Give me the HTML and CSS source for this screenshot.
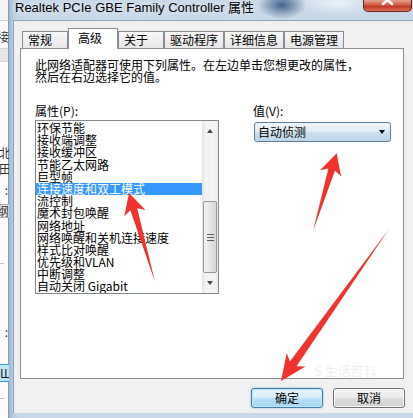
FILE: index.html
```html
<!DOCTYPE html>
<html>
<head>
<meta charset="utf-8">
<title>Realtek PCIe GBE Family Controller 属性</title>
<link rel="stylesheet" href="styles.css">
</head>
<body>
<div class="screen">
  <div class="behind">
    <div class="b-head"></div>
    <div class="frag f-jie">接</div>
    <div class="b-band"></div>
    <div class="frag f-bei">北</div>
    <div class="frag f-tian">田</div>
    <div class="frag f-colon">:</div>
    <div class="frag f-box">纲</div>
    <div class="b-line l1"></div>
    <div class="frag f-colon2">:</div>
    <div class="frag f-blue">Ш</div>
    <div class="b-line l2"></div>
  </div>
  <div class="window">
    <div class="titlebar">
      <span class="title">Realtek PCIe GBE Family Controller 属性</span>
      <span class="close"><svg width="47" height="11" viewBox="0 0 47 11"><path d="M19 -4 L28 4 M28 -4 L19 4" stroke="#fff" stroke-width="2.6" stroke-linecap="round"/></svg></span>
    </div>
    <div class="client">
      <div class="tabs">
        <div class="tab">常规</div>
        <div class="tab active">高级</div>
        <div class="tab">关于</div>
        <div class="tab">驱动程序</div>
        <div class="tab">详细信息</div>
        <div class="tab">电源管理</div>
      </div>
      <div class="panel">
        <p class="desc">此网络适配器可使用下列属性。在左边单击您想更改的属性，<br>然后在右边选择它的值。</p>
        <div class="cols">
          <div class="col-left">
            <div class="label">属性(P):</div>
            <div class="listbox">
              <ul class="items">
                <li>环保节能</li>
                <li>接收端调整</li>
                <li>接收缓冲区</li>
                <li>节能乙太网路</li>
                <li>巨型帧</li>
                <li class="sel">连接速度和双工模式</li>
                <li>流控制</li>
                <li>魔术封包唤醒</li>
                <li>网络地址</li>
                <li>网络唤醒和关机连接速度</li>
                <li>样式比对唤醒</li>
                <li>优先级和VLAN</li>
                <li>中断调整</li>
                <li>自动关闭 Gigabit</li>
              </ul>
              <div class="vscroll">
                <div class="sb-btn"><span class="tri up"></span></div>
                <div class="track">
                  <div class="thumb"><span class="grip"></span></div>
                </div>
                <div class="sb-btn"><span class="tri down"></span></div>
              </div>
            </div>
          </div>
          <div class="col-right">
            <div class="label">值(V):</div>
            <div class="select"><span>自动侦测</span><span class="caret"></span></div>
          </div>
        </div>
      </div>
      <div class="buttons">
        <button class="btn default">确定</button>
        <button class="btn">取消</button>
      </div>
    </div>
  </div>
  <div class="watermark">S 生活百科</div>
  <svg class="arrows" width="413" height="418" viewBox="0 0 413 418">
    <polygon points="129,193 124.3,216.3 130.4,210.3 155,282 137.2,208.3 145.5,210.1"/>
    <polygon points="336.7,153.3 341.1,176.6 335,170.6 313,231 328.4,168.6 320.1,170.2"/>
    <polygon points="281,381 305.5,366.5 296.5,366.2 389,229 289.9,361.6 286.7,353.1"/>
  </svg>
</div>
</body>
</html>
```
FILE: styles.css
```css
* { box-sizing: border-box; }
html, body { margin: 0; padding: 0; }
body {
  width: 413px;
  height: 418px;
  overflow: hidden;
  background: #fff;
  font-family: "Noto Sans CJK SC", "Noto Sans", sans-serif;
  color: #000;
}
.screen {
  position: relative;
  display: flex;
  width: 413px;
  height: 418px;
  overflow: hidden;
}

/* window behind */
.behind {
  flex: none;
  width: 9px;
  display: flex;
  flex-direction: column;
  align-items: flex-end;
  background: #fff;
  border-right: 1px solid #8c9aa8;
  font-size: 12px;
  line-height: 12px;
  color: #333;
}
.b-head { align-self: stretch; height: 21px; background: #f2f2f2; border-bottom: 1px solid #cfcfcf; flex: none; }
.frag { flex: none; white-space: nowrap; width: 12px; }
.f-jie { margin-top: 10px; margin-right: -1px; }
.b-band { align-self: stretch; flex: none; height: 14px; margin-top: 5px; background: #e6e6e6; border-top: 1px solid #d4d4d4; border-bottom: 1px solid #d4d4d4; }
.f-bei { margin-top: 85px; margin-right: -3px; }
.f-tian { margin-top: 4px; margin-right: -3px; }
.f-colon { margin-top: 9px; width: 6px; text-align: right; }
.f-box { margin-top: 8px; background: #e9e9e9; border: 1px solid #a9a9a9; width: 14px; margin-right: -2px; }
.b-line { align-self: stretch; flex: none; height: 1px; background: #c4c4c4; margin-right: 4px; }
.b-line.l1 { margin-top: 45px; }
.f-colon2 { margin-top: 62px; width: 6px; text-align: right; }
.f-blue { margin-top: 26px; height: 18px; line-height: 16px; width: 12px; margin-right: -3px; background: #bfe6f7; border: 1px solid #3a9ad0; color: #123; }
.b-line.l2 { margin-top: 16px; }

/* main window */
.window {
  flex: 1;
  display: flex;
  flex-direction: column;
  padding: 0 0 5px 4px;
  background:
    radial-gradient(ellipse 24px 14px at 273px 5px, rgba(40, 78, 122, 0.85), rgba(40, 78, 122, 0) 100%),
    radial-gradient(ellipse 40px 12px at 328px 3px, rgba(238, 246, 252, 0.9), rgba(238, 246, 252, 0)),
    linear-gradient(90deg, #9db9d6 0, #b6cde3 4px, #c8d8e8 10px, #c8d8e8 100%);
}
.titlebar {
  flex: none;
  height: 20px;
  display: flex;
  justify-content: space-between;
  align-items: flex-start;
}
.title {
  margin-left: 2px;
  font-family: "Liberation Sans", "Noto Sans CJK SC", sans-serif;
  font-size: 13px;
  line-height: 15px;
  color: #000;
  text-shadow: 0 0 6px rgba(255, 255, 255, 0.9);
  white-space: nowrap;
}
.close {
  display: block;
  width: 49px;
  height: 12px;
  margin-right: 1px;
  border: 1px solid #6e2518;
  border-top: none;
  border-radius: 0 0 5px 5px;
  background: linear-gradient(#e6a393, #d45a44 45%, #c23a22 60%, #d8705c);
}
.close svg { display: block; }

.client {
  flex: 1;
  display: flex;
  flex-direction: column;
  background: #f0f0f0;
  border-top: 1px solid #8ba2ba;
  border-left: 1px solid #8ba2ba;
  padding: 7px 9px 0 6px;
}
.tabs {
  flex: none;
  position: relative;
  z-index: 1;
  display: flex;
  align-items: flex-end;
  height: 21px;
  margin-bottom: -1px;
  padding-left: 2px;
}
.tab {
  height: 17px;
  margin-bottom: 1px;
  min-width: 46px;
  padding: 0 5px;
  border: 1px solid #898c95;
  border-bottom: none;
  background: linear-gradient(#f8f8f8, #e7e7e7);
  font-size: 12px;
  line-height: 16px;
  white-space: nowrap;
}
.tab.active {
  height: 21px;
  margin-bottom: 0;
  min-width: 50px;
  padding: 1px 6px 0 9px;
  background: #fff;
}

.panel {
  flex: 1;
  background: #fff;
  border: 1px solid #898c95;
  padding: 10px 0 0 14px;
}
.desc {
  margin: 0;
  font-size: 12px;
  line-height: 12px;
  white-space: nowrap;
}
.cols {
  display: flex;
  gap: 34px;
  margin-top: 22px;
}
.col-left { width: 184px; }
.col-right { width: 138px; }
.label {
  font-size: 12px;
  line-height: 12px;
  height: 12px;
}
.listbox {
  margin-top: 3px;
  width: 184px;
  height: 174px;
  display: flex;
  border: 1px solid #828790;
  background: #fff;
}
.items {
  flex: 1;
  list-style: none;
  margin: 0;
  padding: 1px 0 0 0;
  font-size: 12px;
  line-height: 12.2px;
  overflow: hidden;
}
.items li { padding-left: 1px; white-space: nowrap; height: 12.2px; }
.items li.sel { background: #3399ff; color: #fff; }

.vscroll {
  flex: none;
  width: 16px;
  display: flex;
  flex-direction: column;
  background: linear-gradient(90deg, #e3e3e3, #f4f4f4 25%, #f4f4f4 75%, #ececec);
}
.sb-btn {
  flex: none;
  height: 20px;
  display: flex;
  align-items: center;
  justify-content: center;
}
.tri { width: 0; height: 0; border-left: 3.5px solid transparent; border-right: 3.5px solid transparent; }
.tri.up { border-bottom: 4px solid #4a4a4a; }
.tri.down { border-top: 4px solid #4a4a4a; }
.track {
  flex: 1;
  display: flex;
  flex-direction: column;
  justify-content: flex-end;
}
.thumb {
  height: 72px;
  margin: 0 1px;
  border: 1px solid #979797;
  border-radius: 2px;
  background: linear-gradient(90deg, #f2f2f2, #e6e6e6 50%, #d6d6d6);
  display: flex;
  align-items: center;
  justify-content: center;
}
.grip {
  width: 7px;
  height: 7px;
  background: repeating-linear-gradient(180deg, #5e5e5e 0, #5e5e5e 1px, transparent 1px, transparent 3px);
}

.select {
  margin-top: 5px;
  margin-left: 1px;
  width: 137px;
  height: 20px;
  display: flex;
  align-items: center;
  justify-content: space-between;
  padding: 0 5px 0 3px;
  border: 1px solid #5d7e9c;
  border-radius: 3px;
  background: linear-gradient(#eef5fa, #e2edf6 45%, #cfe1ef 50%, #bdd5e8);
  font-size: 12px;
  line-height: 14px;
}
.caret {
  width: 0;
  height: 0;
  border-left: 3.5px solid transparent;
  border-right: 3.5px solid transparent;
  border-top: 4px solid #000;
}

.buttons {
  flex: none;
  height: 34px;
  display: flex;
  justify-content: flex-end;
  align-items: flex-start;
  gap: 10px;
  padding-top: 9px;
  margin-right: -1px;
}
.btn {
  width: 72px;
  height: 20px;
  padding: 0;
  font-family: "Noto Sans CJK SC", sans-serif;
  font-size: 12px;
  line-height: 16px;
  color: #000;
  border-radius: 3px;
  border: 1px solid #707070;
  background: linear-gradient(#f2f2f2, #ebebeb 50%, #dddddd 50%, #cfcfcf);
  box-shadow: inset 0 0 0 1px #fbfbfb;
}
.btn.default {
  border-color: #3c7fb1;
  background: linear-gradient(#e6f4fc, #d5eefb 50%, #b9e1f7 50%, #a2d4f1);
  box-shadow: inset 0 0 0 1px #c4e6f8, 0 0 2px #62b0e3;
}

.watermark {
  position: absolute;
  left: 314px;
  top: 364px;
  font-size: 13px;
  line-height: 14px;
  color: rgba(200, 200, 200, 0.3);
  white-space: nowrap;
}
.arrows {
  position: absolute;
  left: 0;
  top: 0;
  pointer-events: none;
}
.arrows polygon { fill: #f0332d; }
```
